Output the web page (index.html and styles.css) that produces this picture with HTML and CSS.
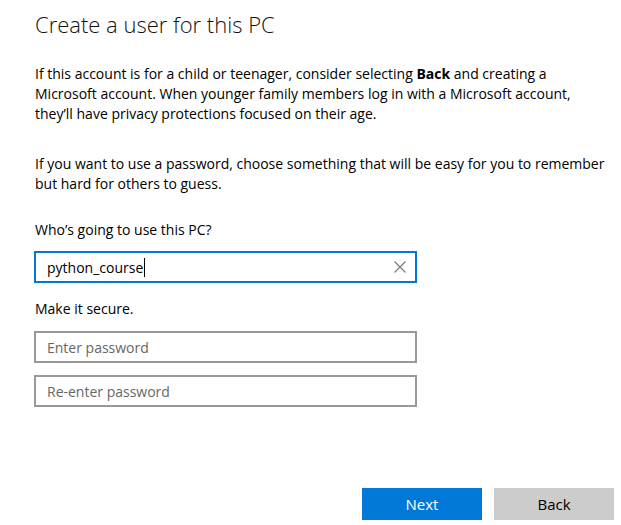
FILE: index.html
```html
<!DOCTYPE html>
<html>
<head>
<meta charset="utf-8">
<link rel="stylesheet" href="styles.css">
</head>
<body>
<div class="page">
  <h1 class="title">Create a user for this PC</h1>
  <p class="para">If this account is for a child or teenager, consider selecting <b>Back</b> and creating a Microsoft account. When younger family members log in with a Microsoft account, they’ll have privacy protections focused on their age.</p>
  <p class="para para2">If you want to use a password, choose something that will be easy for you to remember but hard for others to guess.</p>
  <div class="label label-who">Who’s going to use this PC?</div>
  <div class="field field-active">
    <span class="value">python_course</span><span class="caret"></span>
    <svg class="clear" width="12" height="12" viewBox="0 0 12 12"><path d="M0.5 0.5 L11.5 11.5 M11.5 0.5 L0.5 11.5" stroke="#777" stroke-width="1.1" fill="none"/></svg>
  </div>
  <div class="label label-secure">Make it secure.</div>
  <div class="field"><span class="placeholder">Enter password</span></div>
  <div class="field field-second"><span class="placeholder">Re-enter password</span></div>
  <div class="actions">
    <button class="btn btn-primary">Next</button>
    <button class="btn btn-secondary">Back</button>
  </div>
</div>
</body>
</html>
```
FILE: styles.css
```css
html, body {
  margin: 0;
  padding: 0;
  background: #ffffff;
}
body {
  font-family: "Open Sans", "Noto Sans", sans-serif;
  color: #000;
  font-size: 14px;
}
.page {
  width: 621px;
  height: 525px;
  box-sizing: border-box;
  padding: 6px 7px 0 34px;
  display: flex;
  flex-direction: column;
}
.title {
  margin: 0 0 0 1px;
  font-weight: 300;
  font-size: 22px;
  line-height: 36px;
  color: #111;
}
.para {
  margin: 22px 0 0 1px;
  width: 576px;
  line-height: 20px;
  font-size: 14px;
  letter-spacing: 0;
}
.para b {
  font-weight: 700;
}
.para2 {
  margin-top: 30px;
}
.label {
  margin-left: 1px;
  line-height: 20px;
}
.label-who {
  margin-top: 26px;
}
.label-secure {
  margin-top: 16px;
}
.field {
  width: 383px;
  height: 32px;
  box-sizing: border-box;
  border: 2px solid #999999;
  margin-top: 12px;
  display: flex;
  align-items: center;
  padding-left: 11px;
  padding-right: 9px;
}
.field-active {
  border-color: #0078d7;
  margin-top: 11px;
}
.field-second {
  margin-top: 12px;
}
.value {
  color: #000;
}
.caret {
  width: 1px;
  height: 19px;
  background: #000;
  margin-left: 1px;
}
.clear {
  margin-left: auto;
}
.placeholder {
  color: #666666;
}
.actions {
  margin-top: auto;
  margin-bottom: 5px;
  display: flex;
  justify-content: flex-end;
  gap: 12px;
}
.btn {
  width: 120px;
  height: 32px;
  border: none;
  font-family: "Open Sans", "Noto Sans", sans-serif;
  font-size: 15px;
  padding: 0;
}
.btn-primary {
  background: #0078d7;
  color: #fff;
}
.btn-secondary {
  background: #cccccc;
  color: #000;
}
```
